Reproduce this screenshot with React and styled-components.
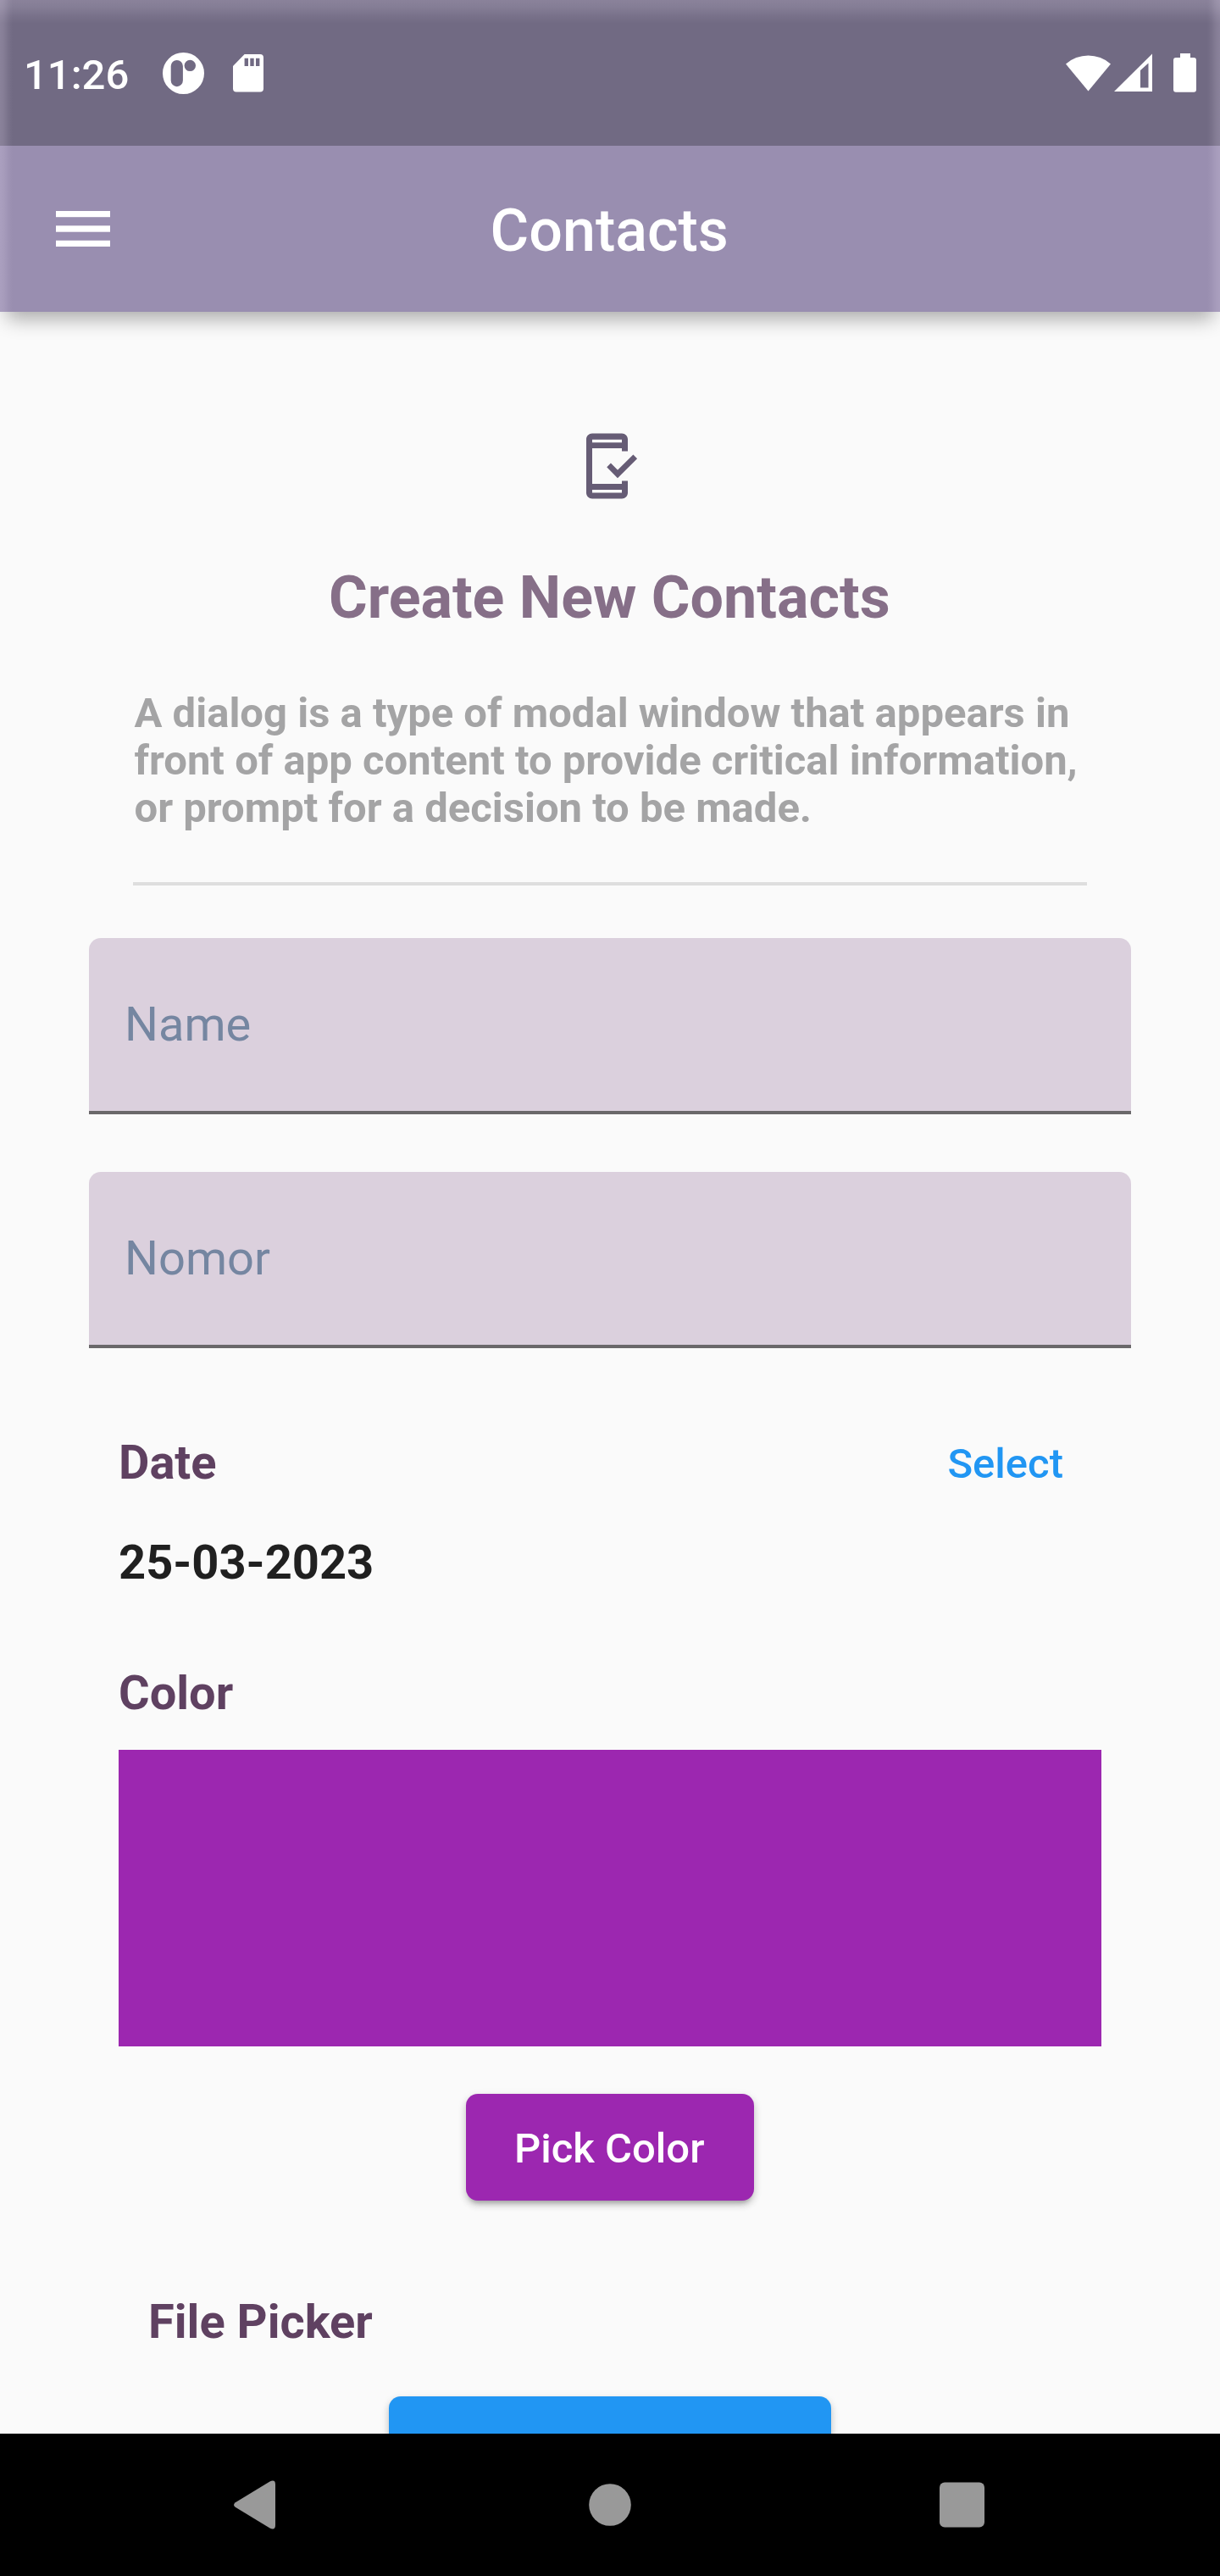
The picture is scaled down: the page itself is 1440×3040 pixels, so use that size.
import React from "react";
import styled, { createGlobalStyle } from "styled-components";

const GlobalStyle = createGlobalStyle`
  * { box-sizing: border-box; }
  body {
    margin: 0;
    background: #fafafa;
    font-family: Roboto, "Noto Sans", sans-serif;
  }
`;

const Screen = styled.div`
  width: 1440px;
  height: 3040px;
  display: flex;
  flex-direction: column;
  overflow: hidden;
  background: #fafafa;
`;

const glow = (angle, size) => `linear-gradient(${angle},
  rgba(245, 234, 255, 0.19) 0,
  rgba(245, 234, 255, 0.15) ${size * 0.3}px,
  rgba(245, 234, 255, 0.05) ${size * 0.7}px,
  rgba(245, 234, 255, 0) ${size}px)`;

const Header = styled.header`
  position: relative;
  z-index: 1;
  flex: none;
  background: #998eb0;
  box-shadow: 0 16px 22px -8px rgba(0, 0, 0, 0.33);
`;

const StatusBar = styled.div`
  height: 172px;
  padding: 0 28px;
  display: flex;
  align-items: flex-start;
  justify-content: space-between;
  background: ${glow("90deg", 15)}, ${glow("270deg", 15)}, ${glow("180deg", 28)}, #716a83;
`;

const StatusGroup = styled.div`
  display: flex;
  padding-top: 60px;
`;

const Clock = styled.span`
  width: 164px;
  font-size: 49px;
  font-weight: 500;
  line-height: 57px;
  color: #fff;
`;

const StatusIcon = styled.svg`
  display: block;
  width: ${(p) => p.$w}px;
  height: 52px;
  margin-left: ${(p) => p.$gap || 0}px;
  fill: #fff;
`;

const AppBar = styled.div`
  height: 196px;
  padding: 0 66px;
  display: grid;
  grid-template-columns: 64px 1fr 64px;
  align-items: center;
  background: ${glow("90deg", 15)}, ${glow("270deg", 15)};
`;

const MenuIcon = styled.svg`
  display: block;
  width: 64px;
  height: 42px;
  fill: #fff;
`;

const Title = styled.h1`
  margin: 0;
  padding: 4px 1.5px 0 0;
  text-align: center;
  font-size: 70px;
  font-weight: 500;
  line-height: 82px;
  color: #fff;
`;

const Content = styled.main`
  flex: none;
  height: 2504px;
  padding: 140px 105px 0;
  overflow: hidden;
`;

const Intro = styled.section`
  padding: 0 52px;
  display: flex;
  flex-direction: column;
  align-items: center;
`;

const PhoneIcon = styled.svg`
  display: block;
  width: 84px;
  height: 84px;
  color: #665c75;
`;

const Heading = styled.h2`
  margin: 72px 0 68px;
  padding-right: 1.5px;
  font-size: 70px;
  font-weight: 700;
  line-height: 82px;
  color: #866f88;
`;

const Description = styled.p`
  margin: 0;
  width: 1126px;
  padding-left: 1.5px;
  font-size: 49px;
  font-weight: 700;
  line-height: 56px;
  white-space: nowrap;
  color: #a4a4a5;
`;

const Divider = styled.hr`
  width: 1126px;
  height: 4px;
  margin: 59px 0 62px;
  border: 0;
  background: #dedede;
`;

const Field = styled.label`
  height: 208px;
  margin-bottom: 68px;
  padding: 0 42px;
  display: flex;
  align-items: center;
  border-bottom: 4px solid #6a686a;
  border-radius: 14px 14px 0 0;
  background: #dbd0dd;
  font-size: 56px;
  line-height: 66px;
  color: #7586a1;
`;

const Details = styled.section`
  padding: 34px 35px 0;
  display: flex;
  flex-direction: column;
`;

const Row = styled.div`
  display: flex;
  align-items: center;
  justify-content: space-between;
  height: 66px;
`;

const Label = styled.h3`
  margin: 0;
  padding-left: ${(p) => p.$indent || 0}px;
  font-size: 56px;
  font-weight: 700;
  line-height: 66px;
  color: #5f4161;
`;

const TextButton = styled.button`
  padding: 2px 0 0;
  margin-right: 45px;
  border: 0;
  background: none;
  font-family: inherit;
  font-size: 49px;
  font-weight: 500;
  line-height: 57px;
  color: #2196f3;
`;

const DateValue = styled.p`
  margin: 52px 0 88px;
  font-size: 56px;
  font-weight: 700;
  line-height: 66px;
  color: #202020;
`;

const Swatch = styled.div`
  height: 350px;
  margin: 34.4px 0 55.6px;
  background: #9c27b0;
`;

const RaisedButton = styled.button`
  align-self: center;
  width: ${(p) => p.$width}px;
  height: 126.5px;
  padding: 3px 1.5px 0 0;
  margin-bottom: ${(p) => p.$after || 0}px;
  flex: none;
  border: 0;
  border-radius: 14px;
  background: ${(p) => p.$color};
  box-shadow: 0 7px 4px -4px rgba(0, 0, 0, 0.16), 0 5px 8px rgba(0, 0, 0, 0.16),
    0 3px 12px rgba(0, 0, 0, 0.09);
  font-family: inherit;
  font-size: 49px;
  font-weight: 500;
  line-height: 57px;
  color: #fff;
`;

const FileLabel = styled(Label)`
  margin-bottom: 55px;
`;

const NavBar = styled.nav`
  height: 168px;
  flex: none;
  padding: 0 278.5px 0 276px;
  display: flex;
  align-items: center;
  justify-content: space-between;
  background: #000;
`;

const NavIcon = styled.svg`
  display: block;
  width: ${(p) => p.$w}px;
  height: 58px;
  margin-left: ${(p) => p.$gap || 0}px;
  fill: #999;
`;

export default function App() {
  return (
    <>
      <GlobalStyle />
      <Screen>
        <Header>
          <StatusBar>
            <StatusGroup>
              <Clock>11:26</Clock>
              <StatusIcon $w={49} viewBox="0 0 49 52">
                <path
                  fillRule="evenodd"
                  d="M24.5 2a24.5 24.5 0 1 0 0 49a24.5 24.5 0 1 0 0-49zM16.8 11a7.1 7.1 0 0 1 7.1 7.1v17a7.1 7.1 0 0 1-14.2 0v-17a7.1 7.1 0 0 1 7.1-7.1zM32.3 10.7a6.7 6.7 0 1 1 0 13.4a6.7 6.7 0 1 1 0-13.4z"
                />
              </StatusIcon>
              <StatusIcon $w={36} $gap={34.3} viewBox="0 0 36 52">
                <path
                  fillRule="evenodd"
                  d="M13.6 4H32a4 4 0 0 1 4 4v36.6a4 4 0 0 1-4 4H4a4 4 0 0 1-4-4V18zM13.6 8.7v9.4h4.4V8.7zM20.3 8.7v9.4h4.4V8.7zM27 8.7v9.4h4.4V8.7z"
                />
              </StatusIcon>
            </StatusGroup>
            <StatusGroup>
              <StatusIcon $w={53} viewBox="0 0 53 52">
                <path d="M0 15.5A40 40 0 0 1 53 15.5L26.5 47.6z" />
              </StatusIcon>
              <StatusIcon $w={45} $gap={4} viewBox="0 0 45 52">
                <path fillRule="evenodd" d="M0 48L45 3.5V48zM31 23v20.4h9.5V14.4z" />
              </StatusIcon>
              <StatusIcon $w={27} $gap={25} viewBox="0 0 27 52">
                <path d="M8 3h12v5h4a3 3 0 0 1 3 3v34.7a3 3 0 0 1-3 3H3a3 3 0 0 1-3-3V11a3 3 0 0 1 3-3h5z" />
              </StatusIcon>
            </StatusGroup>
          </StatusBar>
          <AppBar>
            <MenuIcon viewBox="0 0 64 42">
              <rect width="64" height="7.2" y="0" />
              <rect width="64" height="7.4" y="17.3" />
              <rect width="64" height="7.2" y="34.8" />
            </MenuIcon>
            <Title>Contacts</Title>
          </AppBar>
        </Header>

        <Content>
          <Intro>
            <PhoneIcon viewBox="0 0 24 24">
              <path
                fill="currentColor"
                fillRule="evenodd"
                d="M6 1h10c1.1 0 2 .9 2 2v4h-2V6H6v12h10v-1h2v4c0 1.1-.9 2-2 2H6c-1.1 0-2-.9-2-2V3c0-1.1.9-2 2-2zM6 3.1v1h10v-1zM6 20v1h10v-1z"
              />
              <path
                fill="none"
                stroke="currentColor"
                strokeWidth="1.9"
                d="M11.6 11.7L14.57 14.7L20.5 8.8"
              />
            </PhoneIcon>
            <Heading>Create New Contacts</Heading>
            <Description>
              A dialog is a type of modal window that appears in
              <br />
              front of app content to provide critical information,
              <br />
              or prompt for a decision to be made.
            </Description>
            <Divider />
          </Intro>

          <Field>Name</Field>
          <Field>Nomor</Field>

          <Details>
            <Row>
              <Label>Date</Label>
              <TextButton>Select</TextButton>
            </Row>
            <DateValue>25-03-2023</DateValue>
            <Label>Color</Label>
            <Swatch />
            <RaisedButton $width={340} $color="#9c27b0" $after={109.5}>
              Pick Color
            </RaisedButton>
            <FileLabel $indent={35}>File Picker</FileLabel>
            <RaisedButton $width={522} $color="#2196f3" aria-hidden="true" />
          </Details>
        </Content>

        <NavBar>
          <NavIcon $w={49} viewBox="0 0 49 58">
            <path d="M1.8 26.2L42.5 1.5Q49-1.5 49 5V53Q49 59.5 42.5 56.5L1.8 31.8Q-1.8 29 1.8 26.2z" />
          </NavIcon>
          <NavIcon $w={50} $gap={6.5} viewBox="0 0 50 58">
            <circle cx="25" cy="29" r="24.8" />
          </NavIcon>
          <NavIcon $w={53} viewBox="0 0 53 58">
            <rect y="2.4" width="53" height="53" rx="6" />
          </NavIcon>
        </NavBar>
      </Screen>
    </>
  );
}
